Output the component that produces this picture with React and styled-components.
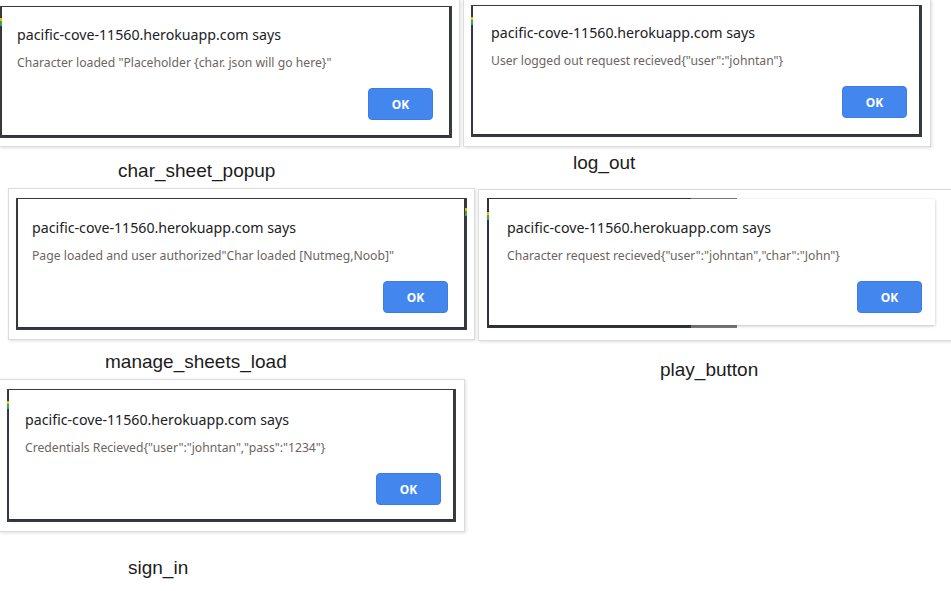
import React from 'react'
import styled, { createGlobalStyle } from 'styled-components'

const GlobalStyle = createGlobalStyle`
  html, body {
    margin: 0;
    padding: 0;
    background: #fff;
  }
  body {
    width: 951px;
    height: 591px;
    overflow: hidden;
    font-family: "Liberation Sans", Arial, sans-serif;
  }
`

const Page = styled.div`
  width: 951px;
  height: 591px;
  overflow: hidden;
  display: flex;
  flex-direction: column;
`

const Row = styled.div`
  display: flex;
  align-items: flex-start;
  margin-top: ${p => p.$top}px;
`

const Cell = styled.div`
  display: flex;
  flex-direction: column;
  align-items: flex-start;
  flex-shrink: 0;
  margin-left: ${p => p.$x}px;
  margin-top: ${p => p.$y}px;
`

const Frame = styled.div`
  background: #fff;
  border: 1px solid #dcdcdc;
  box-shadow: 1px 1px 3px rgba(0, 0, 0, 0.13);
  padding: ${p => p.$pad};
`

const Shot = styled.div`
  position: relative;
  box-sizing: border-box;
  width: ${p => p.$w}px;
  height: ${p => p.$h}px;
  background: ${p => p.$bg || '#3a3d41'};
  padding: ${p => p.$edge || '1px 3px 3px 2px'};
  display: flex;
`

const Accent = styled.span`
  position: absolute;
  top: ${p => p.$top}px;
  ${p => (p.$right ? 'right: 0;' : 'left: 0;')}
  width: 2px;
  height: 8px;
  background: linear-gradient(#f2b600 0 35%, #34a853 35% 100%);
`

const Dialog = styled.div`
  flex: 1;
  display: flex;
  flex-direction: column;
  background: #fff;
  box-shadow: 0 1px 3px rgba(0, 0, 0, 0.25);
  padding: ${p => p.$pt}px ${p => p.$pr}px 0 ${p => p.$pl}px;
`

const Title = styled.div`
  font-family: "Noto Sans", "Open Sans", sans-serif;
  font-size: 14.2px;
  line-height: 20px;
  color: #202124;
  white-space: nowrap;
`

const Message = styled.div`
  margin-top: 10px;
  font-family: "Noto Sans", "Open Sans", sans-serif;
  font-size: 12.2px;
  line-height: 16px;
  color: #6b6561;
  white-space: nowrap;
`

const Actions = styled.div`
  display: flex;
  justify-content: flex-end;
  margin-top: 17px;
`

const OkButton = styled.button`
  width: 65px;
  height: 32px;
  border: 1px solid #3b7de8;
  border-radius: 4px;
  background: #4387ee;
  color: #fff;
  font-family: "Noto Sans", "Open Sans", sans-serif;
  font-size: 12px;
  font-weight: 700;
  padding: 0;
`

const Caption = styled.div`
  margin-top: ${p => p.$top}px;
  margin-left: ${p => p.$left}px;
  font-size: 19px;
  line-height: 22px;
  color: #1c1c1c;
  white-space: nowrap;
`

const rows = [
  {
    top: 0,
    cells: [
      {
        x: -1, y: -1, pad: '6px 7px 8px 0',
        w: 452, h: 132, tx: 17, ty: 29, okr: 19, accent: 12,
        title: 'pacific-cove-11560.herokuapp.com says',
        msg: 'Character loaded "Placeholder {char. json will go here}"',
        caption: 'char_sheet_popup', capTop: 13, capLeft: 119,
      },
      {
        x: 3, y: -1, pad: '5px 8px 9px 7px',
        w: 451, h: 132, tx: 20, ty: 28, okr: 15, accent: 12,
        title: 'pacific-cove-11560.herokuapp.com says',
        msg: 'User logged out request recieved{"user":"johntan"}',
        caption: 'log_out', capTop: 5, capLeft: 110,
      },
    ],
  },
  {
    top: 6,
    cells: [
      {
        x: 8, y: 0, pad: '9px 7px 9px 7px',
        w: 451, h: 132, tx: 16, ty: 30, okr: 19, accent: 10, accentRight: true,
        title: 'pacific-cove-11560.herokuapp.com says',
        msg: 'Page loaded and user authorized"Char loaded [Nutmeg,Noob]"',
        caption: 'manage_sheets_load', capTop: 11, capLeft: 97,
      },
      {
        x: 3, y: 1, pad: '8px 14px 12px 8px',
        w: 451, h: 130, tx: 20, ty: 30, okr: 16, accent: 14,
        bg: 'linear-gradient(to right, #34373b 0 204px, #7a7c80 204px 250px, #ffffff 250px)',
        title: 'pacific-cove-11560.herokuapp.com says',
        msg: 'Character request recieved{"user":"johntan","char":"John"}',
        caption: 'play_button', capTop: 18, capLeft: 182,
      },
    ],
  },
  {
    top: -2,
    cells: [
      {
        x: -1, y: 0, pad: '9px 8px 9px 7px',
        w: 449, h: 133, tx: 18, ty: 31, okr: 15, accent: 12,
        title: 'pacific-cove-11560.herokuapp.com says',
        msg: 'Credentials Recieved{"user":"johntan","pass":"1234"}',
        caption: 'sign_in', capTop: 25, capLeft: 129,
      },
    ],
  },
]

function Figure({ cell }) {
  const edgeTop = 1
  return (
    <Cell $x={cell.x} $y={cell.y}>
      <Frame $pad={cell.pad}>
        <Shot $w={cell.w} $h={cell.h} $bg={cell.bg}>
          <Accent $top={cell.accent} $right={cell.accentRight} />
          <Dialog $pt={cell.ty - 10 - edgeTop} $pl={cell.tx - 2} $pr={cell.okr - 3}>
            <Title>{cell.title}</Title>
            <Message>{cell.msg}</Message>
            <Actions>
              <OkButton>OK</OkButton>
            </Actions>
          </Dialog>
        </Shot>
      </Frame>
      <Caption $top={cell.capTop} $left={cell.capLeft}>{cell.caption}</Caption>
    </Cell>
  )
}

export default function App() {
  return (
    <Page>
      <GlobalStyle />
      {rows.map((row, i) => (
        <Row key={i} $top={row.top}>
          {row.cells.map(cell => (
            <Figure key={cell.caption} cell={cell} />
          ))}
        </Row>
      ))}
    </Page>
  )
}
